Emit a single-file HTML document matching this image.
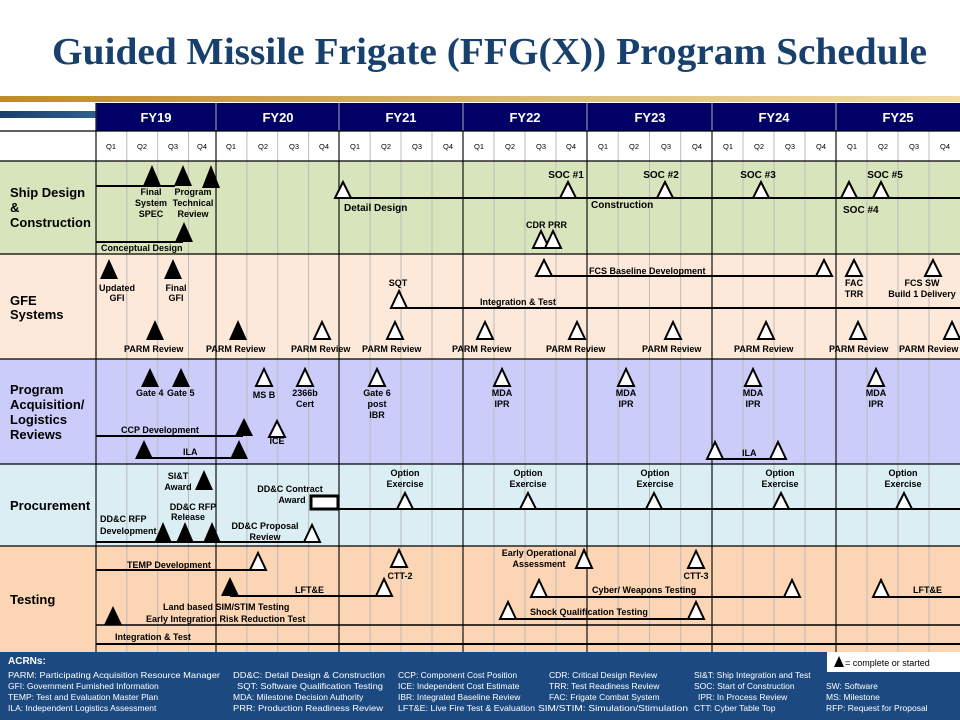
<!DOCTYPE html>
<html><head><meta charset="utf-8"><style>
html,body{margin:0;padding:0;background:#fff;width:960px;height:720px;overflow:hidden}
svg{display:block}
.f{fill:#000}
.o{fill:#fff;stroke:#000;stroke-width:2}
.t{font-family:"Liberation Sans",sans-serif;font-size:9px;font-weight:bold;fill:#000}
.c{text-anchor:middle}
.L{font-family:"Liberation Sans",sans-serif;font-size:13px;font-weight:bold;fill:#000}
.q{font-family:"Liberation Sans",sans-serif;font-size:7.5px;fill:#000;text-anchor:middle}
.fy{font-family:"Liberation Sans",sans-serif;font-size:13px;font-weight:bold;fill:#fff;text-anchor:middle}
.a{font-family:"Liberation Sans Narrow","Liberation Sans",sans-serif;font-size:8.5px;fill:#fff}
.ln{stroke:#000;stroke-width:2}
</style></head><body>
<svg width="960" height="720" viewBox="0 0 960 720" xmlns="http://www.w3.org/2000/svg">
<defs>
<linearGradient id="gold" x1="0" x2="1"><stop offset="0" stop-color="#c08a2a"/><stop offset="0.6" stop-color="#dcc07a"/><stop offset="1" stop-color="#f0dca0"/></linearGradient>
<linearGradient id="blu" x1="0" x2="1"><stop offset="0" stop-color="#1a3f6c"/><stop offset="1" stop-color="#2f5e8e"/></linearGradient>
</defs>
<text x="52" y="64" textLength="875" lengthAdjust="spacingAndGlyphs" font-family="Liberation Serif,serif" font-weight="bold" font-size="38" fill="#17406d">Guided Missile Frigate (FFG(X)) Program Schedule</text>
<rect x="0" y="96" width="960" height="6" fill="url(#gold)"/>
<rect x="0" y="111" width="96" height="7" fill="url(#blu)"/>
<rect x="0" y="161" width="960" height="93" fill="#d8e4bc"/>
<rect x="0" y="254" width="960" height="105" fill="#fde9d9"/>
<rect x="0" y="359" width="960" height="105" fill="#ccccfb"/>
<rect x="0" y="464" width="960" height="82" fill="#daeef3"/>
<rect x="0" y="546" width="960" height="106" fill="#fcd5b4"/>
<rect x="96" y="103" width="864" height="28" fill="#000066"/>
<rect x="96" y="131" width="864" height="30" fill="#fff"/>
<g stroke="#bbb" stroke-width="1">
<line x1="126.8" y1="131" x2="126.8" y2="652"/><line x1="157.7" y1="131" x2="157.7" y2="652"/><line x1="188.5" y1="131" x2="188.5" y2="652"/>
<line x1="246.9" y1="131" x2="246.9" y2="652"/><line x1="277.7" y1="131" x2="277.7" y2="652"/><line x1="308.6" y1="131" x2="308.6" y2="652"/>
<line x1="370.1" y1="131" x2="370.1" y2="652"/><line x1="401" y1="131" x2="401" y2="652"/><line x1="432" y1="131" x2="432" y2="652"/>
<line x1="494" y1="131" x2="494" y2="652"/><line x1="525" y1="131" x2="525" y2="652"/><line x1="556" y1="131" x2="556" y2="652"/>
<line x1="618.2" y1="131" x2="618.2" y2="652"/><line x1="649.5" y1="131" x2="649.5" y2="652"/><line x1="680.7" y1="131" x2="680.7" y2="652"/>
<line x1="743" y1="131" x2="743" y2="652"/><line x1="774" y1="131" x2="774" y2="652"/><line x1="805" y1="131" x2="805" y2="652"/>
<line x1="867" y1="131" x2="867" y2="652"/><line x1="898" y1="131" x2="898" y2="652"/><line x1="929" y1="131" x2="929" y2="652"/>
</g>
<g stroke="#222" stroke-width="1.3">
<line x1="96" y1="103" x2="96" y2="652"/><line x1="216" y1="131" x2="216" y2="652"/><line x1="339" y1="131" x2="339" y2="652"/><line x1="463" y1="131" x2="463" y2="652"/><line x1="587" y1="131" x2="587" y2="652"/><line x1="712" y1="131" x2="712" y2="652"/><line x1="836" y1="131" x2="836" y2="652"/>
</g>
<g stroke="#aab" stroke-width="1"><line x1="216" y1="103" x2="216" y2="131"/><line x1="339" y1="103" x2="339" y2="131"/><line x1="463" y1="103" x2="463" y2="131"/><line x1="587" y1="103" x2="587" y2="131"/><line x1="712" y1="103" x2="712" y2="131"/><line x1="836" y1="103" x2="836" y2="131"/></g>
<g stroke="#000" stroke-width="1.2">
<line x1="0" y1="131" x2="960" y2="131"/><line x1="0" y1="161" x2="960" y2="161"/><line x1="0" y1="254" x2="960" y2="254"/><line x1="0" y1="359" x2="960" y2="359"/><line x1="0" y1="464" x2="960" y2="464"/><line x1="0" y1="546" x2="960" y2="546"/>
</g>
<text class="fy" x="156" y="122">FY19</text><text class="fy" x="278" y="122">FY20</text><text class="fy" x="401" y="122">FY21</text><text class="fy" x="525" y="122">FY22</text><text class="fy" x="650" y="122">FY23</text><text class="fy" x="774" y="122">FY24</text><text class="fy" x="898" y="122">FY25</text>
<g>
<text class="q" x="111" y="149">Q1</text><text class="q" x="142" y="149">Q2</text><text class="q" x="173" y="149">Q3</text><text class="q" x="202" y="149">Q4</text>
<text class="q" x="231" y="149">Q1</text><text class="q" x="263" y="149">Q2</text><text class="q" x="294" y="149">Q3</text><text class="q" x="324" y="149">Q4</text>
<text class="q" x="355" y="149">Q1</text><text class="q" x="386" y="149">Q2</text><text class="q" x="417" y="149">Q3</text><text class="q" x="448" y="149">Q4</text>
<text class="q" x="479" y="149">Q1</text><text class="q" x="510" y="149">Q2</text><text class="q" x="541" y="149">Q3</text><text class="q" x="571" y="149">Q4</text>
<text class="q" x="603" y="149">Q1</text><text class="q" x="634" y="149">Q2</text><text class="q" x="666" y="149">Q3</text><text class="q" x="697" y="149">Q4</text>
<text class="q" x="728" y="149">Q1</text><text class="q" x="759" y="149">Q2</text><text class="q" x="790" y="149">Q3</text><text class="q" x="821" y="149">Q4</text>
<text class="q" x="852" y="149">Q1</text><text class="q" x="883" y="149">Q2</text><text class="q" x="914" y="149">Q3</text><text class="q" x="945" y="149">Q4</text>
</g>
<text class="L" x="10" y="197">Ship Design</text><text class="L" x="10" y="212">&amp;</text><text class="L" x="10" y="227">Construction</text>
<text class="L" x="10" y="305">GFE</text><text class="L" x="10" y="319">Systems</text>
<text class="L" x="10" y="394">Program</text><text class="L" x="10" y="409">Acquisition/</text><text class="L" x="10" y="424">Logistics</text><text class="L" x="10" y="439">Reviews</text>
<text class="L" x="10" y="510">Procurement</text>
<text class="L" x="10" y="604">Testing</text>

<line class="ln" x1="96" y1="186" x2="175" y2="186"/>
<polygon class="f" points="152,165 143,186 161,186"/><polygon class="f" points="183,165 174,186 192,186"/><polygon class="f" points="211,165 202,188 220,188"/>
<text class="t c" x="151" y="195">Final</text><text class="t c" x="151" y="206">System</text><text class="t c" x="151" y="217">SPEC</text>
<text class="t c" x="193" y="195">Program</text><text class="t c" x="193" y="206">Technical</text><text class="t c" x="193" y="217">Review</text>
<line class="ln" x1="96" y1="242" x2="183" y2="242"/><polygon class="f" points="184,222 175,242 193,242"/>
<text class="t" x="101" y="251">Conceptual Design</text>
<line class="ln" x1="343" y1="198" x2="960" y2="198"/>
<polygon class="o" points="343,182 335,198 351,198"/>
<text class="t" x="344" y="211" style="font-size:10px">Detail  Design</text>
<text class="t" x="591" y="208" style="font-size:10px">Construction</text>
<polygon class="o" points="568,182 560,198 576,198"/><text class="t c" x="566" y="178" style="font-size:10px">SOC #1</text>
<polygon class="o" points="665,182 657,198 673,198"/><text class="t c" x="661" y="178" style="font-size:10px">SOC #2</text>
<polygon class="o" points="761,182 753,198 769,198"/><text class="t c" x="758" y="178" style="font-size:10px">SOC #3</text>
<polygon class="o" points="849,182 841,198 857,198"/><text class="t" x="843" y="213" style="font-size:10px">SOC #4</text>
<polygon class="o" points="881,182 873,198 889,198"/><text class="t c" x="885" y="178" style="font-size:10px">SOC #5</text>
<text class="t" x="526" y="228">CDR PRR</text>
<polygon class="o" points="541,231 533,248 549,248"/><polygon class="o" points="553,231 545,248 561,248"/>

<polygon class="f" points="109,259 100,279 118,279"/><polygon class="f" points="173,259 164,279 182,279"/>
<text class="t c" x="117" y="291">Updated</text><text class="t c" x="117" y="301">GFI</text>
<text class="t c" x="176" y="291">Final</text><text class="t c" x="176" y="301">GFI</text>
<text class="t c" x="398" y="286">SQT</text>
<line class="ln" x1="399" y1="308" x2="960" y2="308"/><polygon class="o" points="399,291 391,308 407,308"/>
<text class="t" x="480" y="305">Integration &amp; Test</text>
<line class="ln" x1="544" y1="276" x2="824" y2="276"/>
<polygon class="o" points="544,260 536,276 552,276"/><polygon class="o" points="824,260 816,276 832,276"/>
<text class="t" x="589" y="274">FCS Baseline Development</text>
<polygon class="o" points="854,260 846,276 862,276"/><text class="t c" x="854" y="286">FAC</text><text class="t c" x="854" y="297">TRR</text>
<polygon class="o" points="933,260 925,276 941,276"/><text class="t c" x="922" y="286">FCS SW</text><text class="t c" x="922" y="297">Build 1 Delivery</text>
<polygon class="f" points="155,320 146,340 164,340"/><polygon class="f" points="238,320 229,340 247,340"/>
<polygon class="o" points="322,322 314,339 330,339"/><polygon class="o" points="395,322 387,339 403,339"/><polygon class="o" points="485,322 477,339 493,339"/><polygon class="o" points="577,322 569,339 585,339"/><polygon class="o" points="673,322 665,339 681,339"/><polygon class="o" points="766,322 758,339 774,339"/><polygon class="o" points="858,322 850,339 866,339"/><polygon class="o" points="952,322 944,339 960,339"/>
<text class="t" x="124" y="352">PARM  Review</text><text class="t" x="206" y="352">PARM  Review</text><text class="t" x="291" y="352">PARM  Review</text><text class="t" x="362" y="352">PARM  Review</text><text class="t" x="452" y="352">PARM  Review</text><text class="t" x="546" y="352">PARM  Review</text><text class="t" x="642" y="352">PARM  Review</text><text class="t" x="734" y="352">PARM  Review</text><text class="t" x="829" y="352">PARM  Review</text><text class="t" x="899" y="352">PARM  Review</text>

<polygon class="f" points="150,368 141,387 159,387"/><polygon class="f" points="181,368 172,387 190,387"/>
<text class="t" x="136" y="396">Gate 4</text><text class="t" x="167" y="396">Gate 5</text>
<polygon class="o" points="264,369 256,386 272,386"/><text class="t c" x="264" y="398">MS  B</text>
<polygon class="o" points="305,369 297,386 313,386"/><text class="t c" x="305" y="396">2366b</text><text class="t c" x="305" y="407">Cert</text>
<polygon class="o" points="377,369 369,386 385,386"/><text class="t c" x="377" y="396">Gate 6</text><text class="t c" x="377" y="407">post</text><text class="t c" x="377" y="418">IBR</text>
<polygon class="o" points="502,369 494,386 510,386"/><text class="t c" x="502" y="396">MDA</text><text class="t c" x="502" y="407">IPR</text>
<polygon class="o" points="626,369 618,386 634,386"/><text class="t c" x="626" y="396">MDA</text><text class="t c" x="626" y="407">IPR</text>
<polygon class="o" points="753,369 745,386 761,386"/><text class="t c" x="753" y="396">MDA</text><text class="t c" x="753" y="407">IPR</text>
<polygon class="o" points="876,369 868,386 884,386"/><text class="t c" x="876" y="396">MDA</text><text class="t c" x="876" y="407">IPR</text>
<line class="ln" x1="96" y1="436" x2="243" y2="436"/><text class="t" x="121" y="433">CCP Development</text>
<polygon class="f" points="244,418 235,436 253,436"/>
<polygon class="o" points="277,421 269,437 285,437"/><text class="t c" x="277" y="444">ICE</text>
<line class="ln" x1="144" y1="458" x2="238" y2="458"/><polygon class="f" points="144,440 135,459 153,459"/><polygon class="f" points="239,440 230,459 248,459"/>
<text class="t" x="183" y="455">ILA</text>
<line class="ln" x1="722" y1="459" x2="772" y2="459"/><polygon class="o" points="715,442 707,459 723,459"/><polygon class="o" points="778,442 770,459 786,459"/>
<text class="t" x="742" y="456">ILA</text>

<text class="t c" x="178" y="479">SI&amp;T</text><text class="t c" x="178" y="490">Award</text>
<polygon class="f" points="204,470 195,490 213,490"/>
<text class="t c" x="290" y="492">DD&amp;C Contract</text><text class="t c" x="292" y="503">Award</text>
<line class="ln" x1="338" y1="509" x2="960" y2="509"/>
<rect x="311" y="496" width="27" height="13" fill="#fff" stroke="#000" stroke-width="3"/>
<polygon class="o" points="405,493 397,509 413,509"/><polygon class="o" points="528,493 520,509 536,509"/><polygon class="o" points="654,493 646,509 662,509"/><polygon class="o" points="781,493 773,509 789,509"/><polygon class="o" points="904,493 896,509 912,509"/>
<text class="t c" x="405" y="476">Option</text><text class="t c" x="405" y="487">Exercise</text>
<text class="t c" x="528" y="476">Option</text><text class="t c" x="528" y="487">Exercise</text>
<text class="t c" x="655" y="476">Option</text><text class="t c" x="655" y="487">Exercise</text>
<text class="t c" x="780" y="476">Option</text><text class="t c" x="780" y="487">Exercise</text>
<text class="t c" x="903" y="476">Option</text><text class="t c" x="903" y="487">Exercise</text>
<text class="t" x="100" y="522">DD&amp;C RFP</text><text class="t" x="100" y="534">Development</text>
<text class="t c" x="193" y="510">DD&amp;C RFP</text><text class="t c" x="188" y="520">Release</text>
<text class="t c" x="265" y="529">DD&amp;C Proposal</text><text class="t c" x="265" y="540">Review</text>
<line class="ln" x1="96" y1="542" x2="312" y2="542"/>
<polygon class="f" points="163,522 154,543 172,543"/><polygon class="f" points="185,522 176,543 194,543"/><polygon class="f" points="212,522 203,543 221,543"/>
<polygon class="o" points="312,525 304,542 320,542"/>

<line class="ln" x1="96" y1="570" x2="258" y2="570"/><text class="t" x="127" y="568">TEMP  Development</text>
<polygon class="o" points="258,553 250,570 266,570"/>
<polygon class="o" points="399,550 391,567 407,567"/><text class="t c" x="400" y="579">CTT-2</text>
<line class="ln" x1="230" y1="596" x2="384" y2="596"/>
<polygon class="f" points="230,577 221,596 239,596"/><polygon class="o" points="384,579 376,596 392,596"/>
<text class="t" x="295" y="593">LFT&amp;E</text>
<text class="t" x="163" y="610">Land based SIM/STIM  Testing</text>
<text class="t" x="146" y="622">Early Integration Risk Reduction Test</text>
<line x1="96" y1="625" x2="960" y2="625" stroke="#000" stroke-width="1.6"/>
<polygon class="f" points="113,606 104,625 122,625"/>
<text class="t" x="115" y="640">Integration &amp; Test</text>
<line class="ln" x1="96" y1="644" x2="960" y2="644"/>
<text class="t c" x="539" y="556">Early Operational</text><text class="t c" x="539" y="567">Assessment</text>
<polygon class="o" points="584,550 576,568 592,568"/>
<polygon class="o" points="696,551 688,568 704,568"/><text class="t c" x="696" y="579">CTT-3</text>
<line class="ln" x1="546" y1="597" x2="792" y2="597"/>
<polygon class="o" points="539,580 531,597 547,597"/><polygon class="o" points="792,580 784,597 800,597"/>
<text class="t" x="592" y="593">Cyber/ Weapons Testing</text>
<line class="ln" x1="881" y1="597" x2="960" y2="597"/><polygon class="o" points="881,580 873,597 889,597"/>
<text class="t" x="913" y="593">LFT&amp;E</text>
<line class="ln" x1="508" y1="619" x2="696" y2="619"/>
<polygon class="o" points="508,602 500,619 516,619"/><polygon class="o" points="696,602 688,619 704,619"/>
<text class="t" x="530" y="615">Shock Qualification Testing</text>

<rect x="0" y="652" width="960" height="68" fill="#1c4a80"/>
<rect x="827" y="652" width="133" height="20" fill="#fff"/>
<polygon points="839,656 834,667 844,667" fill="#000"/>
<text x="845" y="666" font-family="Liberation Sans Narrow,Liberation Sans,sans-serif" font-size="9" fill="#000">= complete or started</text>
<text x="8" y="664" font-family="Liberation Sans,sans-serif" font-weight="bold" font-size="10" fill="#fff">ACRNs:</text>
<text class="a" x="8" y="678" textLength="212" lengthAdjust="spacingAndGlyphs">PARM: Participating Acquisition Resource Manager</text>
<text class="a" x="8" y="689">GFI: Government Furnished Information</text>
<text class="a" x="8" y="700">TEMP:  Test and Evaluation Master Plan</text>
<text class="a" x="8" y="711">ILA: Independent  Logistics Assessment</text>
<text class="a" x="233" y="678" textLength="152" lengthAdjust="spacingAndGlyphs">DD&amp;C: Detail Design &amp; Construction</text>
<text class="a" x="237" y="689" textLength="146" lengthAdjust="spacingAndGlyphs">SQT: Software Qualification Testing</text>
<text class="a" x="233" y="700">MDA: Milestone Decision Authority</text>
<text class="a" x="233" y="711" textLength="150" lengthAdjust="spacingAndGlyphs">PRR: Production Readiness Review</text>
<text class="a" x="398" y="678">CCP: Component Cost Position</text>
<text class="a" x="398" y="689">ICE: Independent  Cost Estimate</text>
<text class="a" x="398" y="700">IBR: Integrated Baseline  Review</text>
<text class="a" x="398" y="711" textLength="137" lengthAdjust="spacingAndGlyphs">LFT&amp;E:  Live Fire Test &amp; Evaluation</text>
<text class="a" x="549" y="678">CDR: Critical Design Review</text>
<text class="a" x="549" y="689">TRR: Test Readiness Review</text>
<text class="a" x="549" y="700">FAC: Frigate Combat System</text>
<text class="a" x="538" y="711" textLength="150" lengthAdjust="spacingAndGlyphs">SIM/STIM:  Simulation/Stimulation</text>
<text class="a" x="694" y="678">SI&amp;T: Ship Integration and Test</text>
<text class="a" x="694" y="689">SOC: Start of Construction</text>
<text class="a" x="698" y="700">IPR: In Process Review</text>
<text class="a" x="694" y="711">CTT: Cyber Table Top</text>
<text class="a" x="826" y="689">SW: Software</text>
<text class="a" x="826" y="700">MS: Milestone</text>
<text class="a" x="826" y="711">RFP: Request for Proposal</text>
</svg>
</body></html>
